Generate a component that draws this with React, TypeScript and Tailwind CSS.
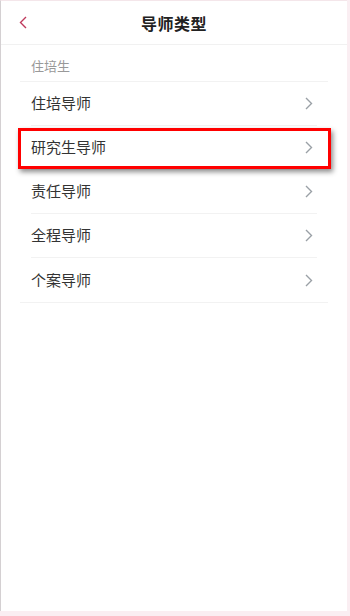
const items = ["住培导师", "研究生导师", "责任导师", "全程导师", "个案导师"]

function Chevron({ dir, className }: { dir: "left" | "right"; className: string }) {
  return (
    <svg viewBox="0 0 8 13" className={className} fill="none" stroke="currentColor" strokeWidth={1.4}>
      {dir === "right" ? <path d="M1 1l5.5 5.5L1 12" /> : <path d="M7 1L1.5 6.5 7 12" />}
    </svg>
  )
}

export default function App() {
  return (
    <div
      className="w-[350px] h-[616px] bg-[#faeef2] overflow-hidden"
      style={{ fontFamily: '"Noto Sans CJK SC", "Noto Sans", sans-serif' }}
    >
      <div className="w-[347px] h-[611px] bg-white border-l border-l-[#d4d0d2] border-t border-t-[#f4e6ea]">
        {/* Header */}
        <div className="relative h-[44px] flex items-center justify-center border-b border-[#f1f1f1]">
          <Chevron dir="left" className="absolute left-[18px] top-[15px] w-[8px] h-[13px] text-[#bf3a5c]" />
          <h1 className="text-[16px] font-bold text-[#222] tracking-[0.5px]">导师类型</h1>
        </div>

        <div className="px-[19px]">
          <div className="h-[37px] flex items-center px-[11px] pt-[6px] text-[13px] text-[#999] border-b border-[#f2f2f2]">
            住培生
          </div>
          <div className="border-b border-[#f2f2f2]">
            {items.map((label, i) => (
              <div key={label} className="relative mx-[11px]">
                <div
                  className={`h-[44px] flex items-center justify-between ${i < items.length - 1 ? "border-b border-[#f2f2f2]" : ""}`}
                >
                  <span className="text-[15px] text-[#333]">{label}</span>
                  <Chevron dir="right" className="w-[8px] h-[13px] text-[#9aa0a6] mr-[4px]" />
                </div>
                {i === 1 && (
                  <div className="absolute left-[-13px] right-[-14px] top-[2px] h-[41px] border-[3px] border-[#ff0000] shadow-[2px_3px_5px_rgba(0,0,0,0.45)]" />
                )}
              </div>
            ))}
          </div>
        </div>
      </div>
    </div>
  )
}
